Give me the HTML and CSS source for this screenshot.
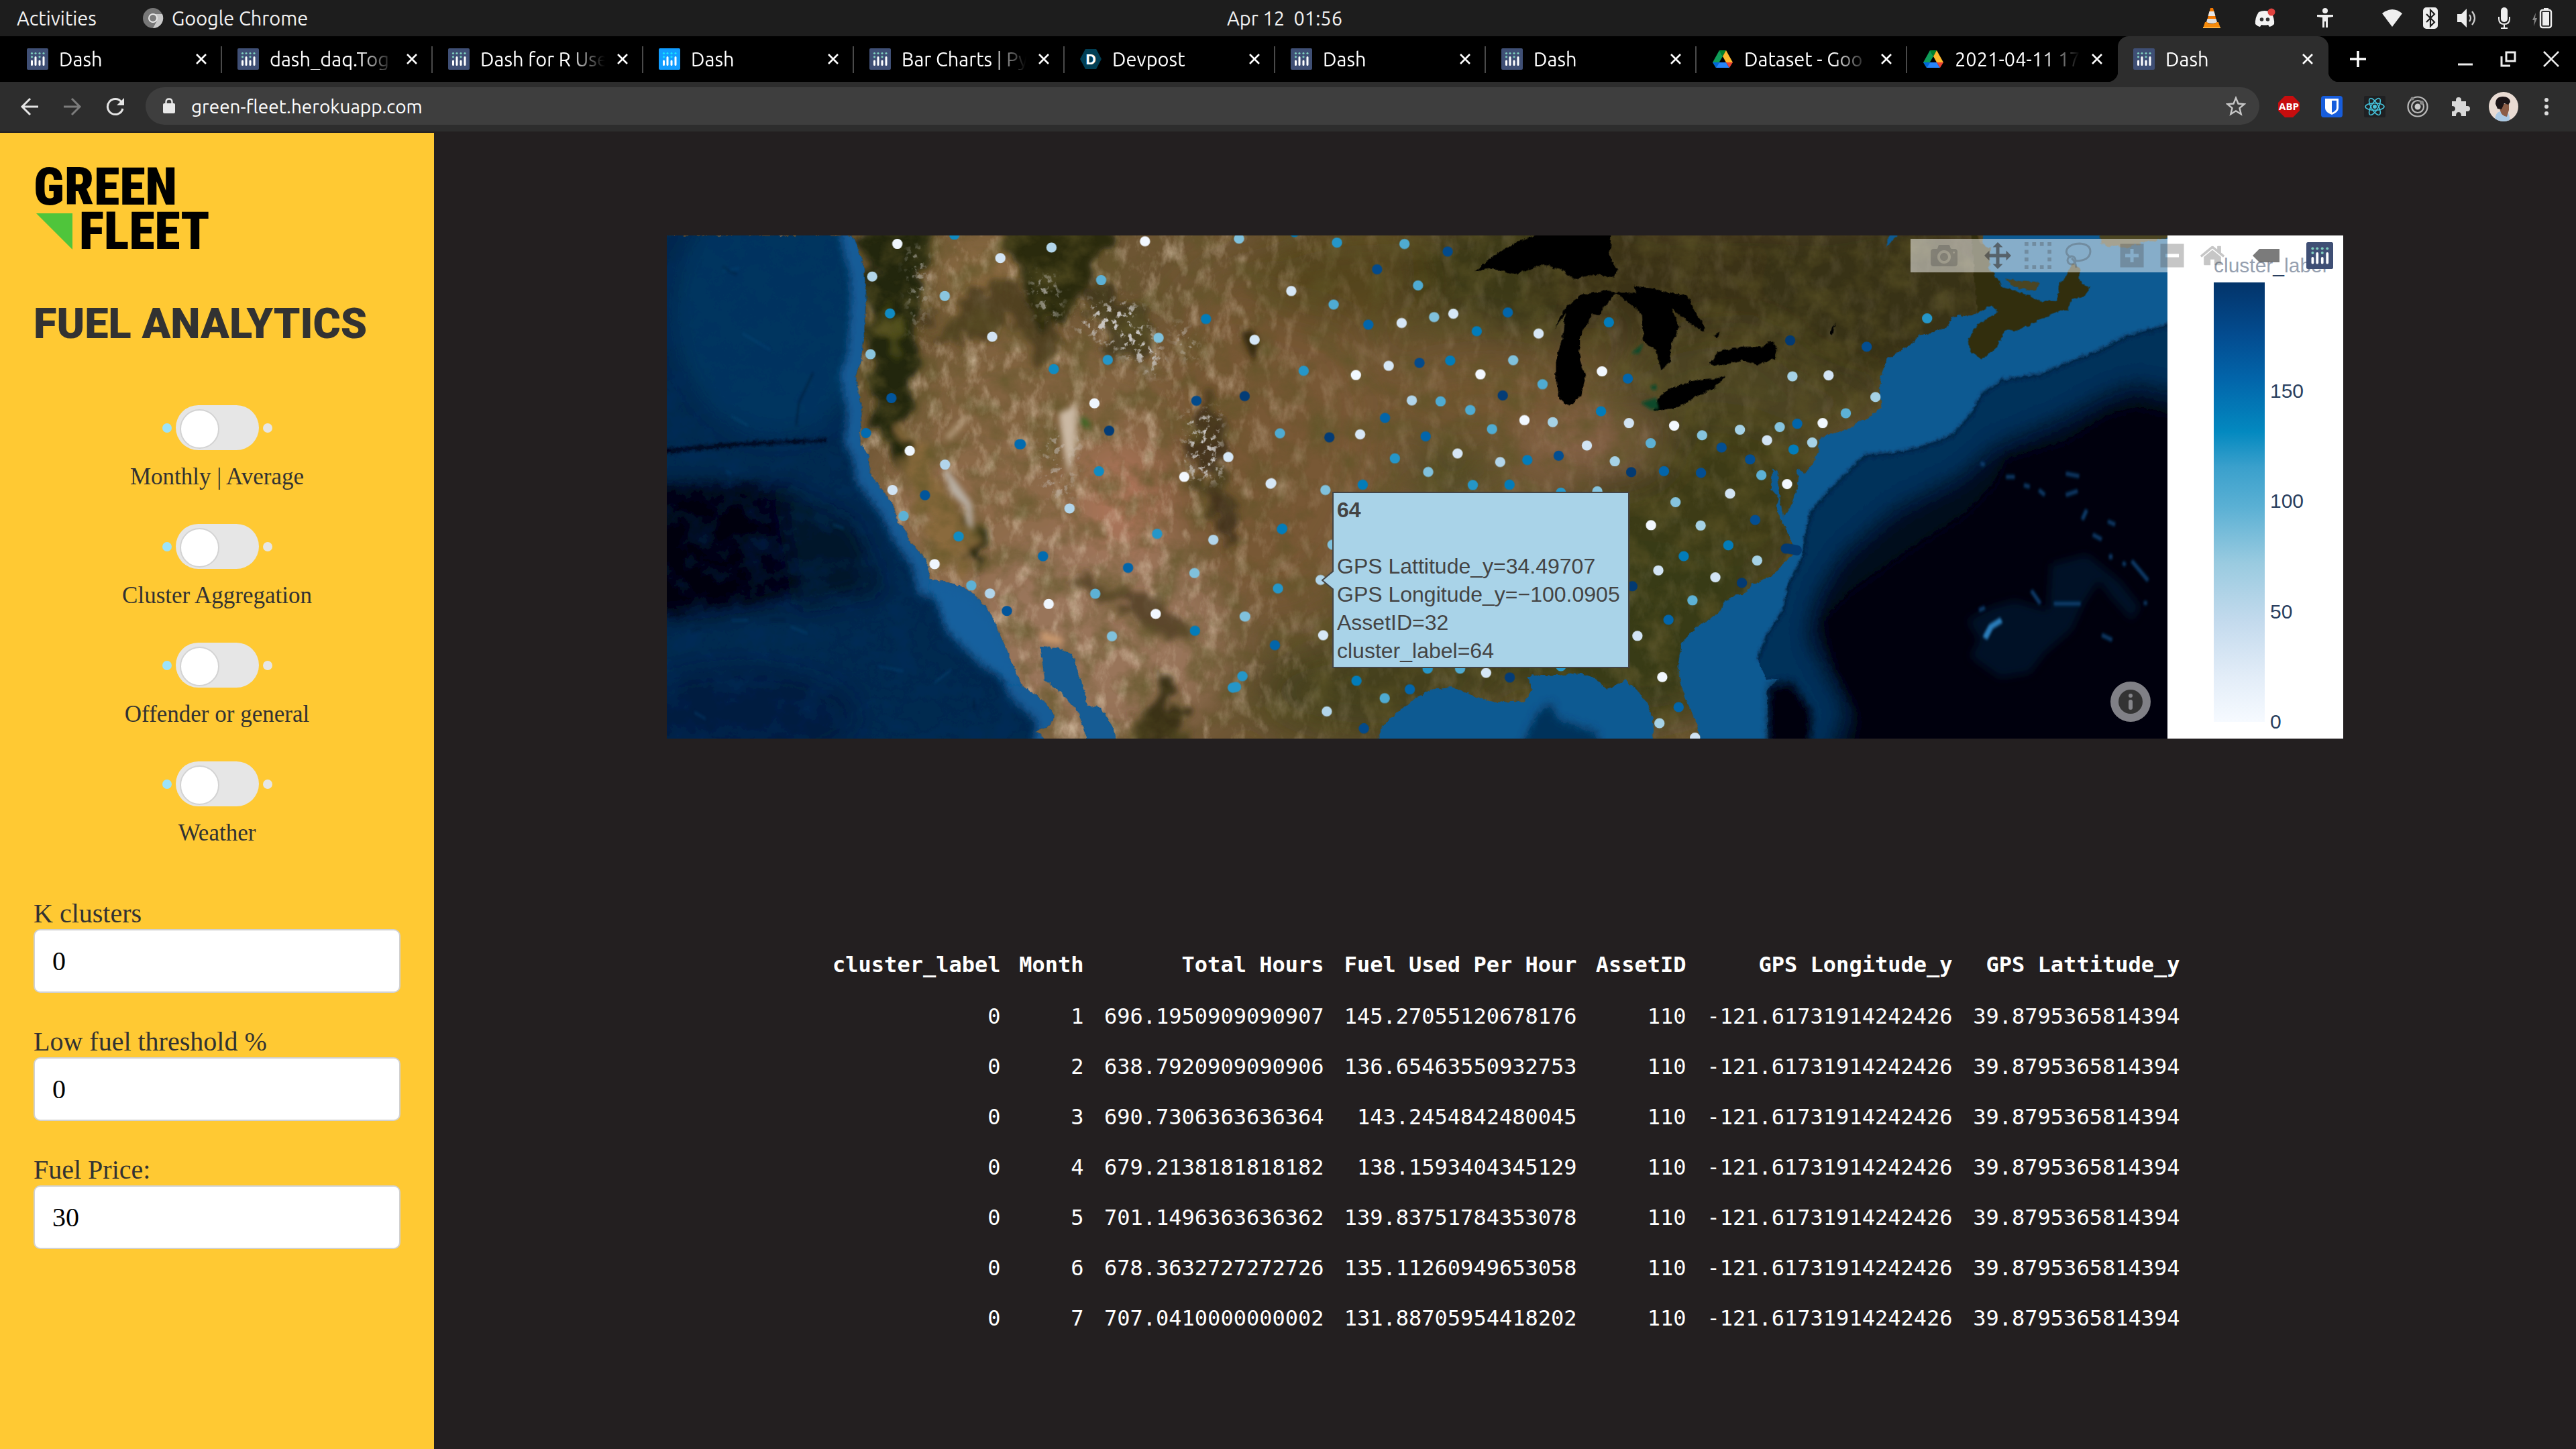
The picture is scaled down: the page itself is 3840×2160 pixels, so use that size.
FILE: index.html
```html
<!DOCTYPE html>
<html lang="en">
<head>
<meta charset="utf-8">
<title>Dash</title>
<link rel="stylesheet" href="styles.css">
</head>
<body>
<svg width="0" height="0" class="defs" aria-hidden="true">
  <defs>
    <symbol id="plotly" viewBox="0 0 32 32">
      <rect width="32" height="32" rx="2" fill="var(--tile, #3f4f75)"/>
      <g fill="var(--dots, #80cfbe)"><circle cx="7.500" cy="7.500" r="1.600"/><circle cx="13" cy="7.500" r="1.600"/><circle cx="19" cy="7.500" r="1.600"/><circle cx="25" cy="7.500" r="1.600"/><circle cx="7.500" cy="12.800" r="1.600"/><circle cx="19" cy="12.800" r="1.600"/></g>
      <g stroke="#fff" stroke-width="3" stroke-linecap="round"><path d="M7.500 19v5.500M13 13.500v11M19 19v5.500M25 13.500v11"/></g>
    </symbol>
    <symbol id="drive" viewBox="0 0 32 28">
      <path d="M11 1h10l-5 9z" fill="#00832d"/><path d="M11 1l5 9-10 17-5-8z" fill="#0f9d58"/><path d="M21 1l10 18h-10l-5-9z" fill="#ffba2f"/><path d="M1 19h10l-5 8z" fill="#0066da"/><path d="M11 19h10l5 8H6z" fill="#2684fc"/><path d="M21 19h10l-5 8z" fill="#ea4335"/>
    </symbol>
    <symbol id="cross" viewBox="0 0 16 16"><path d="M1 1l14 14M15 1L1 15" stroke="currentColor" stroke-width="2.600" fill="none"/></symbol>
  </defs>
</svg>

<header class="topbar">
  <div class="topbar-left">
    <button class="top-item">Activities</button>
    <button class="top-item app">
      <svg width="32" height="32" viewBox="0 0 32 32"><circle cx="16" cy="16" r="15" fill="#777"/><path d="M16 10h14a15 15 0 0 1-14 21l6-11z" fill="#c9c9c9"/><circle cx="16" cy="16" r="7" fill="#e8e8e8"/><circle cx="16" cy="16" r="5" fill="#7c7c7c"/></svg>
      Google Chrome
    </button>
  </div>
  <time class="clock">Apr 12&nbsp; 01:56</time>
  <div class="tray">
    <svg class="t-vlc" width="28" height="32" viewBox="0 0 28 32"><path d="M12 1h4l6 22H6z" fill="#f57900"/><path d="M10.500 6h7l2 7h-11z" fill="#e8e8e8"/><path d="M7.500 17h13l1.500 5q-8 4-16 0z" fill="#ddd"/><path d="M4 22h2q8 5 16 0h2l3 9H1z" fill="#f58a0b"/><path d="M1 29h26v2H1z" fill="#fcaf3e"/></svg>
    <svg class="t-discord" width="32" height="32" viewBox="0 0 32 32"><path d="M7 7q9-4 18 0 6 9 5 18-3 3-7 4l-2-3q-5 1-10 0l-2 3q-4-1-7-4-1-9 5-18z" fill="#f4f4f4"/><circle cx="11.500" cy="18" r="2.800" fill="#333"/><circle cx="20.500" cy="18" r="2.800" fill="#333"/><circle cx="26" cy="7" r="5.500" fill="#e0433f"/></svg>
    <svg class="t-access" width="24" height="30" viewBox="0 0 24 30" fill="#eee"><circle cx="12" cy="4" r="4"/><path d="M0 10h24v3l-8 1v15h-3v-9h-2v9H8V14l-8-1z"/></svg>
    <svg class="t-wifi" width="32" height="28" viewBox="0 0 32 28"><path d="M1 7q15-12 30 0L16 27z" fill="#eee"/></svg>
    <svg class="t-bt" width="24" height="32" viewBox="0 0 24 32"><rect x="1" width="22" height="32" rx="5" fill="#eee"/><path d="M6 10l12 12-6 6V4l6 6L6 22" fill="none" stroke="#1d1d1d" stroke-width="2.200"/></svg>
    <svg class="t-vol" width="30" height="28" viewBox="0 0 30 28"><path d="M0 8h6l8-8v28l-8-8H0z" fill="#eee"/><path d="M18 9q4 5 0 10M22 4q8 10 0 20" fill="none" stroke="#ccc" stroke-width="2.200"/></svg>
    <svg class="t-mic" width="20" height="32" viewBox="0 0 20 32"><rect x="5" width="10" height="22" rx="5" fill="#eee"/><path d="M2 14v3q0 8 8 8t8-8v-3M10 25v6M5 31h10" fill="none" stroke="#eee" stroke-width="2"/></svg>
    <svg class="t-bat" width="30" height="32" viewBox="0 0 30 32"><path d="M5 8L0 19h3l-1 9 5-12H4z" fill="#888"/><path d="M17 1h7v3h-7z" fill="#eee"/><rect x="12" y="4" width="16" height="26" rx="3" fill="none" stroke="#eee" stroke-width="2.400"/><path d="M15 7h10v20H15z" fill="#eee"/></svg>
  </div>
</header>

<nav class="tabs" aria-label="Open tabs">
  <div class="tab"><svg class="fav"><use href="#plotly"/></svg><a href="#" class="tab-title">Dash</a><button class="tab-x" aria-label="Close"><svg width="16" height="16"><use href="#cross"/></svg></button></div>
  <div class="tab"><svg class="fav"><use href="#plotly"/></svg><a href="#" class="tab-title">dash_daq.Tog</a><button class="tab-x" aria-label="Close"><svg width="16" height="16"><use href="#cross"/></svg></button></div>
  <div class="tab"><svg class="fav"><use href="#plotly"/></svg><a href="#" class="tab-title">Dash for R Use</a><button class="tab-x" aria-label="Close"><svg width="16" height="16"><use href="#cross"/></svg></button></div>
  <div class="tab"><svg class="fav bright"><use href="#plotly"/></svg><a href="#" class="tab-title">Dash</a><button class="tab-x" aria-label="Close"><svg width="16" height="16"><use href="#cross"/></svg></button></div>
  <div class="tab"><svg class="fav"><use href="#plotly"/></svg><a href="#" class="tab-title">Bar Charts | Py</a><button class="tab-x" aria-label="Close"><svg width="16" height="16"><use href="#cross"/></svg></button></div>
  <div class="tab"><svg class="fav" viewBox="0 0 32 32"><path d="M8 1h16l8 15-8 15H8L0 16z" fill="#003e54"/><text x="16" y="24" text-anchor="middle" class="fav-letter">D</text></svg><a href="#" class="tab-title">Devpost</a><button class="tab-x" aria-label="Close"><svg width="16" height="16"><use href="#cross"/></svg></button></div>
  <div class="tab"><svg class="fav"><use href="#plotly"/></svg><a href="#" class="tab-title">Dash</a><button class="tab-x" aria-label="Close"><svg width="16" height="16"><use href="#cross"/></svg></button></div>
  <div class="tab"><svg class="fav"><use href="#plotly"/></svg><a href="#" class="tab-title">Dash</a><button class="tab-x" aria-label="Close"><svg width="16" height="16"><use href="#cross"/></svg></button></div>
  <div class="tab"><svg class="fav"><use href="#drive"/></svg><a href="#" class="tab-title">Dataset - Goo</a><button class="tab-x" aria-label="Close"><svg width="16" height="16"><use href="#cross"/></svg></button></div>
  <div class="tab"><svg class="fav"><use href="#drive"/></svg><a href="#" class="tab-title">2021-04-11 17</a><button class="tab-x" aria-label="Close"><svg width="16" height="16"><use href="#cross"/></svg></button></div>
  <div class="tab active"><svg class="fav"><use href="#plotly"/></svg><a href="#" class="tab-title">Dash</a><button class="tab-x" aria-label="Close"><svg width="16" height="16"><use href="#cross"/></svg></button></div>
  <button class="tab-new" aria-label="New tab"><svg width="24" height="24"><path d="M12 0v24M0 12h24" stroke="#fff" stroke-width="3.500"/></svg></button>
  <div class="window-buttons">
    <button aria-label="Minimize"><svg width="24" height="24"><path d="M1 20h22" stroke="#eee" stroke-width="3"/></svg></button>
    <button aria-label="Restore"><svg width="24" height="24" fill="none" stroke="#eee" stroke-width="3"><path d="M9 2h13v13H9zM2 8v14h13"/></svg></button>
    <button aria-label="Close window"><svg width="24" height="24"><path d="M1 1l22 22M23 1L1 23" stroke="#eee" stroke-width="2.600"/></svg></button>
  </div>
</nav>

<div class="toolbar">
  <div class="nav-buttons">
    <button aria-label="Back"><svg width="28" height="28" fill="none" stroke="#e4e4e4" stroke-width="3"><path d="M27 14H3M15 2L3 14l12 12"/></svg></button>
    <button aria-label="Forward"><svg width="28" height="28" fill="none" stroke="#7c7c7c" stroke-width="3"><path d="M1 14h24M13 2l12 12-12 12"/></svg></button>
    <button aria-label="Reload"><svg width="28" height="28" fill="none" stroke="#e4e4e4" stroke-width="3"><path d="M23 7a11.500 11.500 0 1 0 2 10"/><path d="M27 1v11H16z" fill="#e4e4e4" stroke="none"/></svg></button>
  </div>
  <div class="omnibox">
    <svg width="18" height="24" viewBox="0 0 18 24"><rect y="8" width="18" height="15" rx="2" fill="#e8e8e8"/><path d="M4.500 9V6q0-4.500 4.500-4.500T13.500 6v3" fill="none" stroke="#e8e8e8" stroke-width="2.400"/></svg>
    <input type="text" aria-label="Address" value="green-fleet.herokuapp.com">
    <button aria-label="Bookmark"><svg width="30" height="30" viewBox="0 0 30 30"><path d="M15 3l3.500 8.500 9 .7-7 6 2.200 9L15 22.300 7.300 27.200l2.200-9-7-6 9-.7z" fill="none" stroke="#c8c8c8" stroke-width="2.400"/></svg></button>
  </div>
  <div class="extensions">
    <button aria-label="Adblock Plus"><svg width="32" height="32" viewBox="0 0 32 32"><path d="M10 0h12l10 10v12L22 32H10L0 22V10z" fill="#c70d0e"/><text x="16" y="21" text-anchor="middle" class="abp">ABP</text></svg></button>
    <button aria-label="Bitwarden"><svg width="32" height="32" viewBox="0 0 32 32"><rect width="32" height="32" rx="4" fill="#175ddc"/><path d="M6 4h20v14q0 6-10 10Q6 24 6 18z" fill="#fff"/><path d="M16 7h7v11q0 4-7 7z" fill="#175ddc"/></svg></button>
    <button aria-label="React"><svg width="32" height="32" viewBox="0 0 32 32"><rect width="32" height="32" rx="2" fill="#1f2022"/><g fill="none" stroke="#46c4dc" stroke-width="1.600"><ellipse cx="16" cy="16" rx="14" ry="5.300"/><ellipse cx="16" cy="16" rx="14" ry="5.300" transform="rotate(60 16 16)"/><ellipse cx="16" cy="16" rx="14" ry="5.300" transform="rotate(120 16 16)"/></g><circle cx="16" cy="16" r="3" fill="#46c4dc"/></svg></button>
    <button aria-label="Recorder"><svg width="32" height="32" viewBox="0 0 32 32" fill="none" stroke="#bbb" stroke-width="2.200"><circle cx="16" cy="16" r="14.500"/><circle cx="16" cy="16" r="9"/><circle cx="16" cy="16" r="4.500" fill="#ccc" stroke="none"/><circle cx="8" cy="4" r="2.500" fill="#888" stroke="none"/><circle cx="22" cy="10" r="3" fill="#888" stroke="none"/></svg></button>
    <button aria-label="Extensions"><svg width="32" height="32" viewBox="0 0 32 32"><path d="M3 8h6V6a4 4 0 0 1 8 0v2h7v7h2a4 4 0 0 1 0 8h-2v7h-7q0-6-4-6t-4 6H3v-7q5 0 5-4t-5-4z" fill="#d8d8d8"/></svg></button>
    <button aria-label="Profile" class="avatar"><svg width="44" height="44" viewBox="0 0 44 44"><clipPath id="face"><circle cx="22" cy="22" r="22"/></clipPath><g clip-path="url(#face)"><path d="M0 0h44v44H0z" fill="#e9dbd3"/><path d="M9 44q0-14 9-15l10 1q4 6 3 14z" fill="#abc9e4"/><path d="M14 18h16v9l-3 10q-8-1-10-9z" fill="#8c5c46"/><path d="M10 18q0-11 11-11 10 0 11 8l-3 4-6-2-4 9-6-1z" fill="#1c1417"/></g></svg></button>
    <button aria-label="Menu" class="menu"><svg width="8" height="28" fill="#ddd"><circle cx="4" cy="4" r="3"/><circle cx="4" cy="14" r="3"/><circle cx="4" cy="24" r="3"/></svg></button>
  </div>
</div>

<div class="page">
  <aside class="sidebar">
    <div class="logo">
      <div>GREEN</div>
      <div class="logo-second"><svg width="54" height="54" viewBox="0 0 54 54"><path d="M0 0h54v54z" fill="#4fc53b"/></svg>FLEET</div>
    </div>
    <h1>FUEL ANALYTICS</h1>
    <div class="switches">
      <label class="switch"><span class="switch-row"><i class="dot on"></i><input type="checkbox"><i class="dot"></i></span>Monthly | Average</label>
      <label class="switch"><span class="switch-row"><i class="dot on"></i><input type="checkbox"><i class="dot"></i></span>Cluster Aggregation</label>
      <label class="switch"><span class="switch-row"><i class="dot on"></i><input type="checkbox"><i class="dot"></i></span>Offender or general</label>
      <label class="switch"><span class="switch-row"><i class="dot on"></i><input type="checkbox"><i class="dot"></i></span>Weather</label>
    </div>
    <form class="fields">
      <div class="field"><label for="k">K clusters</label><input id="k" type="text" value="0"></div>
      <div class="field"><label for="low">Low fuel threshold %</label><input id="low" type="text" value="0"></div>
      <div class="field"><label for="price">Fuel Price:</label><input id="price" type="text" value="30"></div>
    </form>
  </aside>

  <main class="content">
    <section class="chart">
      <div class="map">
        <svg class="map-svg" viewBox="0 0 2238 750" preserveAspectRatio="xMidYMid slice" role="img" aria-label="Satellite map of fleet clusters">
          <defs>
            <filter id="b60" x="-50%" y="-50%" width="200%" height="200%"><feGaussianBlur stdDeviation="34"/></filter>
            <filter id="b14" x="-50%" y="-50%" width="200%" height="200%"><feGaussianBlur stdDeviation="14"/></filter>
            <filter id="b4" x="-50%" y="-50%" width="200%" height="200%"><feGaussianBlur stdDeviation="4"/></filter>
            <filter id="rough" x="-5%" y="-5%" width="110%" height="110%"><feTurbulence type="fractalNoise" baseFrequency="0.060" numOctaves="3" seed="4"/><feDisplacementMap in="SourceGraphic" scale="14" xChannelSelector="R" yChannelSelector="G"/></filter>
            <filter id="ragged" x="-20%" y="-20%" width="140%" height="140%"><feTurbulence type="fractalNoise" baseFrequency="0.030" numOctaves="4" seed="5"/><feDisplacementMap in="SourceGraphic" scale="70" xChannelSelector="R" yChannelSelector="G"/><feGaussianBlur stdDeviation="5"/></filter>
            <filter id="patchy" x="-20%" y="-20%" width="140%" height="140%"><feTurbulence type="fractalNoise" baseFrequency="0.090" numOctaves="4" seed="9"/><feColorMatrix values="0 0 0 0 0  0 0 0 0 0  0 0 0 0 0  7 0 0 0 -3.900" result="n"/><feGaussianBlur in="SourceGraphic" stdDeviation="10" result="s"/><feComposite in="s" in2="n" operator="in"/></filter>
            <filter id="shade" x="0" y="0" width="100%" height="100%"><feTurbulence type="fractalNoise" baseFrequency="0.022 0.026" numOctaves="6" seed="3"/><feColorMatrix values="0 0 0 0 0.110  0 0 0 0 0.090  0 0 0 0 0.020  1.900 0 0 0 -0.760"/></filter>
            <filter id="light" x="0" y="0" width="100%" height="100%"><feTurbulence type="fractalNoise" baseFrequency="0.045 0.025" numOctaves="5" seed="12"/><feColorMatrix values="0 0 0 0 0.700  0 0 0 0 0.560  0 0 0 0 0.400  0 1.900 0 0 -0.900"/></filter>
            <filter id="sea" x="0" y="0" width="100%" height="100%"><feTurbulence type="fractalNoise" baseFrequency="0.010 0.014" numOctaves="4" seed="7"/><feColorMatrix values="0 0 0 0 0  0 0 0 0 0.030  0 0 0 0 0.120  1.800 0 0 0 -0.750"/></filter>
            <linearGradient id="east" x1="0" x2="1"><stop offset="0" stop-color="#fff" stop-opacity=".9"/><stop offset=".34" stop-color="#fff" stop-opacity=".85"/><stop offset=".45" stop-color="#fff" stop-opacity=".25"/><stop offset="1" stop-color="#fff" stop-opacity=".1"/></linearGradient>
            <mask id="west"><rect width="2238" height="750" fill="url(#east)"/></mask>
            <clipPath id="pacific"><path d="M31 22H690L712 70 730 120 738 200 730 330 722 400 700 450 712 500 725 560 715 625 718 655 745 690 752 745 800 800 835 840 850 895 880 920 890 950 950 1005 965 1065 1050 1080 1110 1105 1165 1150 1190 1190 1230 1270 1290 1390 1360 1430 1405 1480 1390 1510 1340 1525 1370 1550 1370 1600H0V-10z"/></clipPath>
            <clipPath id="atlantic"><path d="M555 1600V1550L545 1510 510 1440 485 1380 478 1320 490 1260 530 1220 580 1190 630 1165 640 1135 680 1112 710 1112 740 1080 810 1055 850 1020 890 985 870 930 845 890 825 850 835 820 805 790 812 730 830 735 835 800 850 880 880 840 905 780 898 730 930 745 955 715 975 680 975 640 1000 630 1100 605 1110 590 1150 575 1200 545 1190 500 1195 450 1215 400 1260 375 1310 350 1330 325 1370 320 1430 300 1450 268 1520 265 1568 245 1553 -10H2260V1600z"/></clipPath>
          </defs>

          <!-- land -->
          <rect width="2238" height="750" fill="#6d5533"/>
          <g filter="url(#b60)">
            <ellipse cx="560" cy="420" rx="260" ry="190" fill="#8d6b49"/>
            <ellipse cx="560" cy="230" rx="200" ry="90" fill="#82643f"/>
            <ellipse cx="640" cy="600" rx="200" ry="160" fill="#99755a"/>
            <ellipse cx="680" cy="390" rx="60" ry="80" fill="#ad755a"/>
            <ellipse cx="480" cy="60" rx="90" ry="70" fill="#8a6a42"/>
            <ellipse cx="900" cy="300" rx="170" ry="260" fill="#785936"/>
            <ellipse cx="1080" cy="60" rx="220" ry="80" fill="#54441f"/>
            <ellipse cx="1330" cy="50" rx="220" ry="110" fill="#3a3813"/>
            <ellipse cx="1600" cy="70" rx="300" ry="110" fill="#3a3212"/>
            <ellipse cx="1620" cy="230" rx="220" ry="90" fill="#4e4424"/>
            <ellipse cx="1830" cy="90" rx="200" ry="140" fill="#373312"/>
            <ellipse cx="1550" cy="400" rx="190" ry="130" fill="#3c3b16"/>
            <ellipse cx="1430" cy="580" rx="220" ry="150" fill="#393a14"/>
            <ellipse cx="1200" cy="560" rx="180" ry="90" fill="#3d3d14"/>
            <ellipse cx="1060" cy="680" rx="190" ry="80" fill="#45401a"/>
            <ellipse cx="1370" cy="310" rx="110" ry="40" fill="#8a6549"/>
            <ellipse cx="1210" cy="240" rx="150" ry="60" fill="#735733"/>
            <ellipse cx="1170" cy="350" rx="60" ry="50" fill="#4d4a20"/>
          </g>
          <g mask="url(#west)"><rect width="2238" height="750" filter="url(#light)"/></g>
          <g filter="url(#ragged)">
            <path d="M290-20H395L378 90 372 200 352 300 400 350 470 440 470 520 440 450 395 370 320 310 305 200z" fill="#20270a"/>
            <path d="M350 300L372 300 450 430 455 500 410 490 370 400z" fill="#8a6b3e"/>
            <path d="M510-20H680L640 60 600 130 560 140 525 60z" fill="#2b2b11"/>
            <path d="M450 90L510 60 560 120 600 170 560 190 520 130 440 160 380 150z" fill="#43371c" opacity=".8"/>
            <path d="M620 70L720 110 720 150 700 200 650 170z" fill="#3c331b" opacity=".8"/>
            <path d="M790 230L830 290 850 400 835 480 810 400 780 330z" fill="#3c3019" opacity=".85"/>
            <path d="M600 500L740 540 780 600 720 590 640 540z" fill="#4e3b22" opacity=".8"/>
            <path d="M715 690L750 640 770 760H690z" fill="#3a3216"/>
            <path d="M320 130L335 90 345 190z" fill="#54531f"/>
          </g>
          <rect width="2238" height="750" filter="url(#shade)" opacity=".75"/>
          <g filter="url(#patchy)" fill="#c9c6c3">
            <path d="M625 100L700 100 740 180 730 210 660 160 610 140z"/>
            <path d="M540 60L580 60 590 120 560 130z" opacity=".7"/>
            <path d="M770 270L820 260 830 360 780 370z"/>
            <path d="M752 130L775 140 790 180 780 190z"/>
            <path d="M360 20H385V90L370 170z" opacity=".7"/>
            <path d="M560 290L620 290 600 400 560 380z" opacity=".5"/>
          </g>
          <g filter="url(#b4)">
            <path d="M585 265L612 252 610 310 600 360 592 320z" fill="#cbb9a4"/>
            <path d="M615 268L628 276 632 288 620 282z" fill="#2f6a24"/>
            <path d="M412 350L420 350 455 400 457 440 448 430 446 405 425 385z" fill="#b9b1a6"/>
            <path d="M415 300L450 265 452 272 422 305z" fill="#b49b7c"/>
            <path d="M558 590L590 600 590 610 560 606z" fill="#c99a70"/>
            <path d="M697 178L725 212 718 208z" fill="#c9c6c3"/>
            <path d="M856 145L874 140 882 160 877 190 868 175z" fill="#35290f"/>
          </g>

          <!-- Pacific -->
          <g transform="translate(-13 -11) scale(.4209 .4911)">
            <g filter="url(#rough)">
              <g clip-path="url(#pacific)">
                <path d="M-40-20H1568V1620H-40z" fill="#04294f"/>
                <g filter="url(#b60)">
                  <ellipse cx="420" cy="250" rx="360" ry="380" fill="#05365f"/>
                  <path d="M-90 790H430L520 1000 480 1120 200 1160-90 1180z" fill="#000012"/>
                  <path d="M430 780L700 900 800 1100 500 1150z" fill="#021429"/>
                  <ellipse cx="300" cy="1480" rx="400" ry="140" fill="#031d40"/>
                </g>
                <path d="M-40 675L300 650 600 638 600 648 300 660-40 690z" fill="#000414" filter="url(#b4)"/>
                <path d="M-60 790L370 775 340 870 400 920 350 1040 520 1060 330 1130-60 1190z" fill="#00000f" opacity=".7" filter="url(#b14)"/>
                <rect x="0" y="0" width="1568" height="1600" filter="url(#sea)" opacity=".6"/>
                <path d="M690-20L712 70 730 120 738 200 730 330 722 400 700 450 712 500 725 560 715 640 745 690 752 745 800 800 835 840 880 920 950 1005 965 1065 1050 1080 1110 1105 1165 1150 1230 1270 1290 1390 1405 1480 1370 1600" fill="none" stroke="#125b97" stroke-width="105" filter="url(#b14)"/>
                <path d="M960 1060L1110 1110 1190 1190 1290 1390 1150 1330 1020 1220z" fill="#12609e" filter="url(#b14)"/>
              </g>
              <path d="M1355 1270L1420 1275 1470 1300 1490 1350 1510 1400 1520 1450 1568 1455 1608 1510 1648 1600H1540L1500 1500 1490 1470 1430 1410 1370 1370z" fill="#125b94"/>
            </g>
            <g filter="url(#b4)" stroke="#0f4d80" fill="none" stroke-width="6" opacity=".5">
              <path d="M230 130l60-8M300 320l100 50M260 570l60 30M620 900l40 12M240 740l20 5M470 1210l60 20M780 1330l90 15M130 1470l40 20M1040 1340l-60 40M260 1190h60"/>
              <path d="M550 440l-50 90-10 70M230 120l50 20M400 1190h50M120 1225l30-10M1120 1430v30" stroke="#01142c"/>
            </g>
          </g>

          <!-- Atlantic, Gulf and the Great Lakes -->
          <g transform="translate(1307 -11) scale(.4209 .4911)">
            <g filter="url(#rough)">
              <g clip-path="url(#atlantic)">
                <path d="M400-20H2280V1620H400z" fill="#115a92"/>
                <path d="M2280 280L2062 330 1977 370 1829 420 1765 445 1627 462 1553 505 1521 560 1447 630 1341 665 1235 685 1140 690 1080 740 1010 800 950 860 930 930 920 1000 870 1080 850 1160 790 1240 760 1310 790 1370 835 1370 790 1400 800 1620H2280z" fill="#06305a"/>
                <path d="M2280 280L2062 330 1977 370 1829 420 1765 445 1627 462 1553 505 1521 560 1447 630 1341 665 1235 685 1140 690 1080 740 1010 800 950 860 930 930 920 1000 870 1080 850 1160 790 1240 760 1310" fill="none" stroke="#04223f" stroke-width="8" filter="url(#b4)"/>
                <path d="M2300 520L2100 480 2000 510 1850 580 1600 670 1480 760 1250 860 1060 1000 970 1130 940 1240 1000 1330 1080 1470 1000 1640 2300 1640z" fill="#00000f" opacity=".8" filter="url(#b60)"/>
                <path d="M2300 580L2100 545 2000 570 1850 650 1640 700 1600 780 1500 870 1300 980 1100 1100 990 1190 1030 1330 1120 1480 1090 1640H2300z" fill="#00000f" filter="url(#b14)"/>
                <path d="M800 1390L880 1380 950 1470 940 1620H800z" fill="#00000f" filter="url(#b14)"/>
              </g>
              <path d="M-610 1610L-568 1510-508 1465-448 1425-398 1400-318 1395-238 1425-168 1440-108 1435-68 1440-38 1400-58 1360 0 1356 50 1358 130 1350 180 1365 225 1400 290 1372 340 1410 370 1450 388 1490 390 1610z" fill="#115a92"/>
              <path d="M-100 1620L-60 1540-20 1470 30 1440 50 1490 190 1530 210 1620z" fill="#06305a" filter="url(#b14)"/>
              <g fill="#000106">
                <path d="M-243 130L-168 80-88 40 0 15H240L235 90 265 125 250 150 180 140 110 155 60 125 0 110-100 140-180 122z"/>
                <path d="M40 305L75 245 130 205 210 190 260 195 215 240 195 265 175 260 130 330 130 400 150 450 135 510 90 543 60 520 45 460 45 400 65 340 80 260z"/>
                <path d="M255 195L330 198 320 175 400 185 440 195 510 205 540 260 575 300 570 315 520 290 455 245 482 300 455 350 450 405 418 432 400 370 355 345 350 260 300 225z"/>
                <path d="M590 415L620 375 700 360 780 360 810 340 828 365 825 395 760 415 700 402 640 415z"/>
                <path d="M390 555L400 520 440 490 520 465 645 450 600 490 540 510 480 545z"/>
                <path d="M1015 320L1035 285 1025 325zM600 325L625 315 615 335z"/>
              </g>
            </g>
            <g filter="url(#b4)" fill="#0d4a29"><path d="M345 530L400 515 410 550 380 550zM310 380L355 350 340 380zM378 480L400 475 403 490 385 490z"/></g>
          </g>

          <!-- Nova Scotia, Newfoundland and the Bermuda rise -->
          <g transform="translate(1827 -11) scale(.4464 .4911)">
            <g filter="url(#rough)">
              <path d="M262-10L300 50 330 60 325 120 370 180 430 195 490 220 550 222 560 170 585 140 600 110 625 120 625 160 658 180 645 205 600 215 590 250 560 250 500 275 420 312 380 310 340 372 295 398 260 375 255 335 290 290 355 254 330 237 285 255z" fill="#302e0e"/>
              <path d="M690 0H945L921 30 860 40 780 60 700 50zM375 150L420 160 490 165 480 190 410 180z" fill="#4b4420"/>
              <path d="M-10 20L20 22-20 60z" fill="#115a92"/>
            </g>
            <g filter="url(#b14)" fill="#02182f" opacity=".8"><path d="M530 1020L650 990 760 1070 830 1150 800 1190 730 1120 690 1070 640 1140 600 1220 510 1290 460 1350 360 1365 260 1300 290 1250 250 1190 330 1150 410 1130 520 1160z"/></g>
            <g filter="url(#b4)" stroke="#0f5088" fill="none" stroke-width="12"><path d="M310 1245L330 1210 365 1190" stroke="#2a7dba" stroke-width="18"/><path d="M465 1100l30 40M380 755h30M440 780l20 5M490 795l20 15M580 745l45 8M580 810l40-12M650 855l-15 30M670 930l30 15M720 890l25 10M800 1010l55 60M770 1015l10 8M730 990v15M700 1235l35 15M540 1140h90M290 1160l20-8M295 715l15 3M840 1138h12" opacity=".75"/></g>
          </g>

          <!-- cluster markers, one path per colour step -->
          <g class="markers">
            <g transform="translate(-13 -11) scale(.4209 .4911)">
              <path stroke="#eff6fe" d="M848 48h1M892 676h1M980 1020h1M1384 1141h1M1546 532h1"/>
              <path stroke="#d2e4f4" d="M1213 91h1M1184 330h1M831 795h1"/>
              <path stroke="#b2d5ea" d="M759 147h1M1394 59h1M1458 851h1M1176 1109h1M1017 718h1"/>
              <path stroke="#8ac5de" d="M1016 206h1M753 383h1"/>
              <path stroke="#5db1d5" d="M870 874h1M1110 1085h1M1549 1110h1M1570 158h1"/>
              <path stroke="#108bc2" d="M1050 20h1M822 259h1M1402 428h1M1065 936h1M1562 738h1"/>
              <path stroke="#026baf" d="M737 622h1M1281 656h5M1364 996h1"/>
              <path stroke="#02559b" d="M827 516h1M946 811h1M1236 1162h1"/>
            </g>
            <g transform="translate(647 -11) scale(.4209 .4911)">
              <path stroke="#f2f8ff" d="M157 40h1M904 446h1M1345 444h1M296 755h1M195 1171h1M1501 583h1"/>
              <path stroke="#d6e7f6" d="M675 191h1M545 339h1M1066 288h1M1249 260h1M1020 418h1M919 626h1M452 695h1M602 776l3-2M1264 684h1M788 1236h1M1551 320h1M1365 1350h1"/>
              <path stroke="#b2d5ea" d="M1102 523h1M399 946h1M801 1467h1M1415 710h1M779 1068h1"/>
              <path stroke="#80c1dc" d="M490 32h1M1181 270h1M205 333h1M1461 401h1M796 795h1M332 1047h1M510 1179h3M40 1239h1M1160 740h1M821 961h1"/>
              <path stroke="#4fabd2" d="M1076 48h1M825 232h1M1124 174h1M635 623h1M1204 526h1M1309 552h1M1386 610h1M1565 474h1M1006 1427h1M1273 1337h1"/>
              <path stroke="#2596c8" d="M837 44h1M25 400h1M719 433h1M1042 699h1M200 928h1M628 1094h1M502 1360h1M468 1395l12-2M1318 780h1M1158 1337h1"/>
              <path stroke="#027cba" d="M686 12h1M373 276h1M1332 313h1M1238 402h1M928 779h1M642 914l2-2M334 1222h1M906 1374h1M1511 704h1M1448 779h1"/>
              <path stroke="#0265aa" d="M948 293h1M1442 256h1M1007 576h1M1151 632h1M97 1031h1M617 1266h1M1095 1400h1"/>
              <path stroke="#034a8b" d="M979 125h1M1229 71h1M1129 409h1M339 524h1M932 1519h1"/>
              <path stroke="#033c76" d="M510 510h1M30 615h1M810 635h1M1424 508h1M1449 1364h1"/>
            </g>
            <g transform="translate(1307 -11) scale(.4209 .4911)">
              <path stroke="#f2f8ff" d="M207 435h2M463 600h1M989 592h1M863 777h1M381 902h1M421 1363h1"/>
              <path stroke="#d2e4f4" d="M303 592h1M154 660h1M792 644h1M661 806h1M1010 447h1M407 1039h1M609 1060h1M333 1238h1M537 1547h1"/>
              <path stroke="#a6d2e6" d="M33 589h1M253 708h1M882 450h1M696 612h1M952 651h1M757 1009h1M557 903h1M411 1503h1M1176 513h1"/>
              <path stroke="#86c4de" d="M562 629h1M837 604h1M468 832h1M191 799h1"/>
              <path stroke="#5db1d5" d="M380 653h1M1071 562h1M772 750h1M528 1130h1"/>
              <path stroke="#2596c8" d="M1359 274h1M62 803h1M62 1330h1"/>
              <path stroke="#027cba" d="M232 286h1M204 556h1M886 672h1M655 963h1M497 996h1"/>
              <path stroke="#0265aa" d="M299 457h1M899 594h1M427 738h1M443 1189h1M479 1454h1"/>
              <path stroke="#034e92" d="M1145 360h1M54 691h1M631 666h1M732 702h1M558 743h1M750 886h1"/>
              <path stroke="#033a72" d="M874 341h1M311 741h1M703 1077h1M859 973h8L898 978M315 1087h1"/>
            </g>
          </g>
        </svg>
        <button class="info" aria-label="Attribution"><svg width="60" height="60" viewBox="0 0 60 60"><circle cx="30" cy="30" r="30" fill="#fff" opacity=".5"/><circle cx="30" cy="30" r="18" fill="#333"/><g fill="#86868a"><circle cx="30" cy="21" r="3"/><rect x="27" y="27" width="6" height="15" rx="3"/></g></svg></button>
        <div class="tip"><b>64</b><br><br>GPS Lattitude_y=34.49707<br>GPS Longitude_y=−100.0905<br>AssetID=32<br>cluster_label=64</div>
        <svg class="tip-arrow" width="18" height="30" viewBox="0 0 18 30"><path d="M18 1L1 15l17 14" fill="#a9d3e8" stroke="#444" stroke-width="2"/></svg>
      </div>
      <div class="legend">
        <div class="legend-title">cluster_label</div>
        <div class="legend-body">
          <div class="colorbar"></div>
          <div class="ticks"><span>150</span><span>100</span><span>50</span><span>0</span></div>
        </div>
      </div>
      <div class="modebar">
        <button aria-label="Download plot"><svg viewBox="0 0 1000 1000" width="40" height="40"><path transform="matrix(1 0 0 -1 0 850)" d="m500 450c-83 0-150-67-150-150 0-83 67-150 150-150 83 0 150 67 150 150 0 83-67 150-150 150z m400 150h-120c-16 0-34 13-39 29l-31 93c-6 15-23 28-40 28h-340c-16 0-34-13-39-28l-31-94c-6-15-23-28-40-28h-120c-55 0-100-45-100-100v-450c0-55 45-100 100-100h800c55 0 100 45 100 100v450c0 55-45 100-100 100z m-400-550c-138 0-250 112-250 250 0 138 112 250 250 250 138 0 250-112 250-250 0-138-112-250-250-250z m365 380c-19 0-35 16-35 35 0 19 16 35 35 35 19 0 35-16 35-35 0-19-16-35-35-35z"/></svg></button>
        <div class="mode-group">
          <button aria-label="Pan" class="on"><svg viewBox="0 0 1000 1000" width="40" height="40"><path transform="matrix(1 0 0 -1 0 850)" d="m1000 350l-187 188 0-125-250 0 0 250 125 0-188 187-187-187 125 0 0-250-250 0 0 125-188-188 186-187 0 125 252 0 0-250-125 0 187-188 188 188-125 0 0 250 250 0 0-126 187 188z"/></svg></button>
          <button aria-label="Box select"><svg viewBox="0 0 1000 1000" width="40" height="40"><path transform="matrix(1 0 0 -1 0 850)" d="m0 850l0-143 143 0 0 143-143 0z m286 0l0-143 143 0 0 143-143 0z m285 0l0-143 143 0 0 143-143 0z m286 0l0-143 143 0 0 143-143 0z m-857-286l0-143 143 0 0 143-143 0z m857 0l0-143 143 0 0 143-143 0z m-857-285l0-143 143 0 0 143-143 0z m857 0l0-143 143 0 0 143-143 0z m-857-286l0-143 143 0 0 143-143 0z m286 0l0-143 143 0 0 143-143 0z m285 0l0-143 143 0 0 143-143 0z m286 0l0-143 143 0 0 143-143 0z"/></svg></button>
          <button aria-label="Lasso select"><svg viewBox="0 0 40 40" width="40" height="40"><g fill="none" stroke="#444" stroke-width="3"><path d="M9 23Q-1 17 4 9 10 2 22 2q16 1 16 12-1 14-22 14"/><circle cx="10" cy="27" r="6"/><path d="M10 24q6 4 7 14"/></g></svg></button>
        </div>
        <div class="mode-group">
          <button aria-label="Zoom in"><svg viewBox="0 0 875 1000" width="40" height="40"><path transform="matrix(1 0 0 -1 0 850)" d="m1 787l0-875 875 0 0 875-875 0z m687-500l-187 0 0-187-125 0 0 187-188 0 0 125 188 0 0 187 125 0 0-187 187 0 0-125z"/></svg></button>
          <button aria-label="Zoom out"><svg viewBox="0 0 875 1000" width="40" height="40"><path transform="matrix(1 0 0 -1 0 850)" d="m0 788l0-876 875 0 0 876-875 0z m688-500l-500 0 0 125 500 0 0-125z"/></svg></button>
          <button aria-label="Reset view"><svg viewBox="0 0 928 1000" width="40" height="40"><path transform="matrix(1 0 0 -1 0 850)" d="m786 296v-267q0-15-11-26t-25-10h-214v214h-143v-214h-214q-15 0-25 10t-11 26v267q0 1 0 2t0 2l321 264 321-264q1-1 1-4z m124 39l-34-41q-5-5-12-6h-2q-7 0-12 3l-386 322-386-322q-7-4-13-4-7 2-12 7l-35 41q-4 5-3 13t6 12l401 334q18 15 42 15t43-15l136-114v109q0 8 5 13t13 5h107q8 0 13-5t5-13v-227l122-102q5-5 6-12t-4-13z"/></svg></button>
        </div>
        <button aria-label="Toggle hover" class="on"><svg viewBox="0 0 1500 1000" width="40" height="40"><path transform="matrix(1 0 0 -1 0 850)" d="m375 725l0 0-375-375 375-374 0-1 1125 0 0 750-1125 0z"/></svg></button>
        <a href="#" aria-label="Plotly" class="brand"><svg width="40" height="40"><use href="#plotly"/></svg></a>
      </div>
    </section>

    <table class="data">
      <colgroup><col class="c-label"><col class="c-month"><col class="c-hours"><col class="c-fuel"><col class="c-asset"><col class="c-lon"><col class="c-lat"></colgroup>
      <thead><tr><th>cluster_label</th><th>Month</th><th>Total Hours</th><th>Fuel Used Per Hour</th><th>AssetID</th><th>GPS Longitude_y</th><th>GPS Lattitude_y</th></tr></thead>
      <tbody>
        <tr><td>0</td><td>1</td><td>696.1950909090907</td><td>145.27055120678176</td><td>110</td><td>-121.61731914242426</td><td>39.8795365814394</td></tr>
        <tr><td>0</td><td>2</td><td>638.7920909090906</td><td>136.65463550932753</td><td>110</td><td>-121.61731914242426</td><td>39.8795365814394</td></tr>
        <tr><td>0</td><td>3</td><td>690.7306363636364</td><td>143.2454842480045</td><td>110</td><td>-121.61731914242426</td><td>39.8795365814394</td></tr>
        <tr><td>0</td><td>4</td><td>679.2138181818182</td><td>138.1593404345129</td><td>110</td><td>-121.61731914242426</td><td>39.8795365814394</td></tr>
        <tr><td>0</td><td>5</td><td>701.1496363636362</td><td>139.83751784353078</td><td>110</td><td>-121.61731914242426</td><td>39.8795365814394</td></tr>
        <tr><td>0</td><td>6</td><td>678.3632727272726</td><td>135.11260949653058</td><td>110</td><td>-121.61731914242426</td><td>39.8795365814394</td></tr>
        <tr><td>0</td><td>7</td><td>707.0410000000002</td><td>131.88705954418202</td><td>110</td><td>-121.61731914242426</td><td>39.8795365814394</td></tr>
      </tbody>
    </table>
  </main>
</div>
</body>
</html>
```
FILE: styles.css
```css
* { box-sizing: border-box; }
body {
  margin: 0;
  min-height: 100vh;
  display: flex;
  flex-direction: column;
  background: #231f20;
  font-family: "Liberation Serif", serif;
}
button {
  border: 0;
  padding: 0;
  background: none;
  color: inherit;
  font: inherit;
  display: flex;
  align-items: center;
}
a { color: inherit; text-decoration: none; }
svg { display: block; flex: none; }
.defs { position: absolute; }

/* desktop bar */
.topbar {
  height: 54px;
  padding: 0 35px 0 25px;
  background: #1d1d1d;
  color: #f2f2f2;
  font: 29px "Ubuntu", "Noto Sans", sans-serif;
  display: grid;
  grid-template-columns: 1fr auto 1fr;
  align-items: center;
}
.topbar-left { display: flex; gap: 68px; }
.app { gap: 12px; }
.clock { white-space: pre; }
.tray { display: flex; align-items: center; justify-content: flex-end; }
.t-discord { margin-left: 49px; }
.t-access { margin-left: 62px; }
.t-wifi { margin-left: 72px; }
.t-bt { margin-left: 29px; }
.t-vol { margin-left: 28px; }
.t-mic { margin-left: 30px; }
.t-bat { margin-left: 32px; }

/* browser tabs */
.tabs {
  height: 68px;
  padding-left: 17px;
  background: #000;
  color: #fff;
  font: 29px "Ubuntu", "Noto Sans", sans-serif;
  display: flex;
  align-items: stretch;
}
.tab {
  flex: 0 1 314px;
  min-width: 0;
  padding: 0 23px;
  display: flex;
  align-items: center;
  position: relative;
}
.tab::after {
  content: "";
  position: absolute;
  right: 0;
  top: 15px;
  height: 40px;
  width: 2px;
  background: #4a4a4a;
}
.tab:has(+ .active)::after, .tab.active::after { display: none; }
.tab.active { background: #2d2d2d; border-radius: 16px 16px 0 0; }
.tab.active::before {
  content: "";
  position: absolute;
  left: -16px;
  right: -16px;
  bottom: 0;
  height: 16px;
  background:
    radial-gradient(circle at 0 0, transparent 16px, #2d2d2d 17px) left / 16px 16px no-repeat,
    radial-gradient(circle at 100% 0, transparent 16px, #2d2d2d 17px) right / 16px 16px no-repeat;
}
.fav { width: 32px; height: 32px; }
.fav.bright { --tile: #119dff; --dots: #19e4ff; }
.fav-letter { font: bold 22px "Noto Sans", sans-serif; fill: #fff; }
.tab-title {
  flex: 1;
  margin: 0 18px 0 16px;
  overflow: hidden;
  white-space: nowrap;
  -webkit-mask-image: linear-gradient(to right, #000 calc(100% - 54px), transparent);
  mask-image: linear-gradient(to right, #000 calc(100% - 54px), transparent);
}
.tab-new { margin-left: 32px; }
.window-buttons { margin-left: auto; padding-right: 25px; display: flex; gap: 40px; }

/* address row */
.toolbar {
  height: 74px;
  padding: 0 40px 0 30px;
  background: #2d2d2d;
  display: flex;
  align-items: center;
  margin-bottom: 2px;
}
.nav-buttons { display: flex; gap: 36px; }
.omnibox {
  flex: 1;
  min-width: 0;
  height: 56px;
  margin: -2px 28px 0 31px;
  padding: 0 20px 0 26px;
  border-radius: 28px;
  background: #3e3e3e;
  display: flex;
  align-items: center;
  gap: 24px;
}
.omnibox input {
  flex: 1;
  min-width: 0;
  padding: 0;
  border: 0;
  background: none;
  color: #fff;
  font: 28px "Ubuntu", "Noto Sans", sans-serif;
}
.extensions { display: flex; align-items: center; gap: 32px; }
.avatar { margin-left: -6px; }
.menu { margin-left: 6px; }
.abp { font: bold 15px "Open Sans", sans-serif; fill: #fff; }

/* page */
.page { flex: 1; display: flex; align-items: stretch; }
.sidebar {
  flex: 0 0 646px;
  padding: 48px 50px 0;
  background: #ffc933;
  color: #323232;
}
.logo {
  color: #000;
  font: 900 78px/66px "Liberation Sans Narrow", "Roboto Condensed", "Roboto", sans-serif;
}
.logo-second { display: flex; align-items: center; gap: 10px; padding-left: 4px; }
h1 {
  margin: 68px 0 0;
  font: 900 63px/74px "Roboto", sans-serif;
  white-space: nowrap;
}
.switches { margin-top: 84px; display: flex; flex-direction: column; gap: 50px; }
.switch {
  display: flex;
  flex-direction: column;
  align-items: center;
  gap: 20px;
  font-size: 35px;
  line-height: 40px;
}
.switch-row { display: flex; align-items: center; gap: 6px; }
.switch input {
  appearance: none;
  margin: 0;
  width: 124px;
  height: 67px;
  padding: 6px;
  border-radius: 34px;
  background: #e6e6e6;
}
.switch input::before {
  content: "";
  display: block;
  width: 55px;
  height: 55px;
  border: 2px solid #d3d3d3;
  border-radius: 50%;
  background: #fff;
}
.dot { width: 14px; height: 14px; border-radius: 50%; background: #e6e6e6; }
.dot.on { background: #9ce3fa; }
.fields { margin-top: 77px; display: flex; flex-direction: column; gap: 50px; }
.field { display: flex; flex-direction: column; font-size: 40px; line-height: 46px; }
.field input {
  height: 95px;
  padding: 0 26px;
  border: 2px solid #d1d1d1;
  border-radius: 10px;
  background: #fff;
  color: #000;
  font: 40px "Liberation Serif", serif;
}

.content { flex: 1; min-width: 0; padding: 153px 347px 0; }
.chart { position: relative; display: flex; height: 750px; background: #fff; font-family: "Liberation Sans", sans-serif; }
.map { flex: 1; min-width: 0; position: relative; overflow: hidden; }
.map-svg { width: 100%; height: 100%; }
.markers path { fill: none; stroke-width: 15px; stroke-linecap: round; vector-effect: non-scaling-stroke; }
.info { position: absolute; right: 25px; bottom: 25px; }
.tip {
  position: absolute;
  left: 992px;
  top: 382px;
  width: 443px;
  height: 263px;
  padding: 4px 5px;
  background: #a9d3e8;
  border: 2px solid #444;
  color: #444;
  font-size: 32px;
  line-height: 42px;
  white-space: nowrap;
}
.tip-arrow { position: absolute; left: 976px; top: 499px; }

.legend { flex: 0 0 262px; padding: 28px 0 0 69px; color: #2a3f5f; font-size: 30px; }
.legend-title { height: 42px; line-height: 34px; }
.legend-body { display: flex; align-items: flex-end; gap: 8px; }
.colorbar {
  width: 76px;
  height: 655px;
  background: linear-gradient(#03346a, #034c90 12%, #0265aa 22%, #0389c0 34%, #3aa0cc 42%, #5ab0d4 51%, #9acbe0 64%, #c3daed 77%, #e3edf8 90%, #f6faff);
}
.ticks {
  height: 527px;
  margin-bottom: -17px;
  line-height: 34px;
  display: flex;
  flex-direction: column;
  justify-content: space-between;
}
.modebar {
  position: absolute;
  right: 0;
  top: 5px;
  height: 50px;
  padding: 0 15px 0 30px;
  background: rgba(255, 255, 255, .5);
  display: flex;
  align-items: center;
  gap: 40px;
}
.mode-group { display: flex; gap: 20px; }
.modebar svg { fill: #444; }
.modebar button { opacity: .3; }
.modebar button.on { opacity: .7; }

.data {
  margin: 298px auto 0;
  table-layout: fixed;
  width: 2036px;
  border-collapse: collapse;
  color: #fff;
  font: 32px "DejaVu Sans Mono", monospace;
}
.c-label { width: 278px; }
.c-month { width: 124px; }
.c-hours { width: 358px; }
.c-fuel { width: 377px; }
.c-asset { width: 163px; }
.c-lon { width: 397px; }
.c-lat { width: 339px; }
th, td { height: 75px; padding: 0 12px 0 0; text-align: right; white-space: nowrap; }
th { height: 78px; }
```
